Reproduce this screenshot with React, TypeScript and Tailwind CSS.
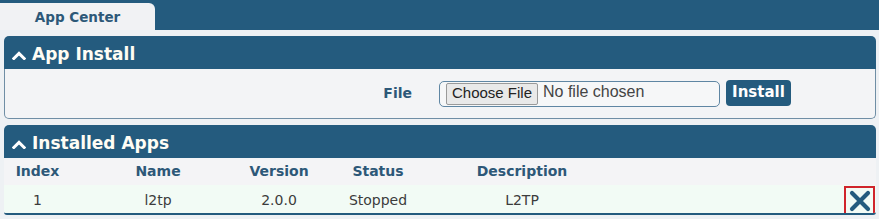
const font = { fontFamily: '"DejaVu Sans", Verdana, sans-serif' };

const Chevron = () => (
  <svg width="14" height="9" viewBox="0 0 14 9" className="shrink-0">
    <polyline points="1.8,7.5 7,2.4 12.2,7.5" fill="none" stroke="#fff" strokeWidth="3" strokeLinecap="square" />
  </svg>
);

const PanelHeader = ({ title }: { title: string }) => (
  <div className="flex items-center h-[33px] bg-[#245b7e] rounded-t-[5px] pl-[8px] pt-[5px] gap-[6px]">
    <Chevron />
    <span className="text-[#fffdf4] font-bold text-[17px]">{title}</span>
  </div>
);

const cols = 'grid grid-cols-[67px_174px_68px_130px_158px_1fr] items-center text-center';

const App = () => {
  return (
    <div className="w-[879px] h-[219px] bg-[#eef1f4] overflow-hidden" style={font}>
      {/* top tabs */}
      <div className="h-[30px] bg-[#245b7e] flex items-end">
        <div className="w-[155px] h-[27px] bg-[#f1f2f4] rounded-tr-[6px] flex items-center justify-center pt-[1px]">
          <span className="text-[13.5px] font-bold text-[#2d5878]">App Center</span>
        </div>
      </div>

      <div className="ml-[4px] mr-[3px] mt-[6px] flex flex-col gap-[6px]">
        {/* App Install */}
        <div>
          <PanelHeader title="App Install" />
          <div className="h-[50px] bg-[#f3f4f6] border border-t-0 border-[#6f8ea5] rounded-b-[5px] flex items-center">
            <span className="w-[407px] text-right font-bold text-[14px] text-[#2d5878]">File</span>
            <div className="ml-[27px] w-[281px] h-[26px] border border-[#5f86a3] rounded-[5px] bg-[#f6f7f8] flex items-center pl-[6px]">
              <span
                className="h-[22px] w-[92px] flex items-center justify-center bg-[#e9e9e9] border border-[#9a9a9a] rounded-[2px] text-[15px] text-[#222]"
                style={{ fontFamily: '"Liberation Sans", Arial, sans-serif' }}
              >
                Choose File
              </span>
              <span
                className="ml-[5px] text-[16px] text-[#444] -mt-[3px]"
                style={{ fontFamily: '"Liberation Sans", Arial, sans-serif' }}
              >
                No file chosen
              </span>
            </div>
            <button className="ml-[6px] w-[65px] h-[26px] bg-[#245b7e] rounded-[4px] text-white font-bold text-[15px] -mt-[2px]">
              Install
            </button>
          </div>
        </div>

        {/* Installed Apps */}
        <div>
          <PanelHeader title="Installed Apps" />
          <div className="border-b-2 border-[#245b7e] rounded-b-[3px] overflow-hidden">
            <div className={`${cols} h-[27px] bg-[#f4f4f6] text-[14px] font-bold text-[#2d5878]`}>
              <span>Index</span>
              <span>Name</span>
              <span>Version</span>
              <span>Status</span>
              <span>Description</span>
              <span />
            </div>
            <div className={`${cols} h-[28px] bg-[#f2fbf5] text-[14px] text-[#3c3c3c]`}>
              <span>1</span>
              <span>l2tp</span>
              <span>2.0.0</span>
              <span>Stopped</span>
              <span>L2TP</span>
              <div className="flex justify-end pr-[1px]">
                <div className="w-[31px] h-[30px] border-2 border-[#d0242b] flex items-center justify-center mt-[1px]">
                  <svg width="22" height="22" viewBox="0 0 22 22">
                    <path d="M3 3 L19 19 M19 3 L3 19" stroke="#245b7e" strokeWidth="4.2" strokeLinecap="round" />
                  </svg>
                </div>
              </div>
            </div>
          </div>
        </div>
      </div>
    </div>
  );
};

export default App;
